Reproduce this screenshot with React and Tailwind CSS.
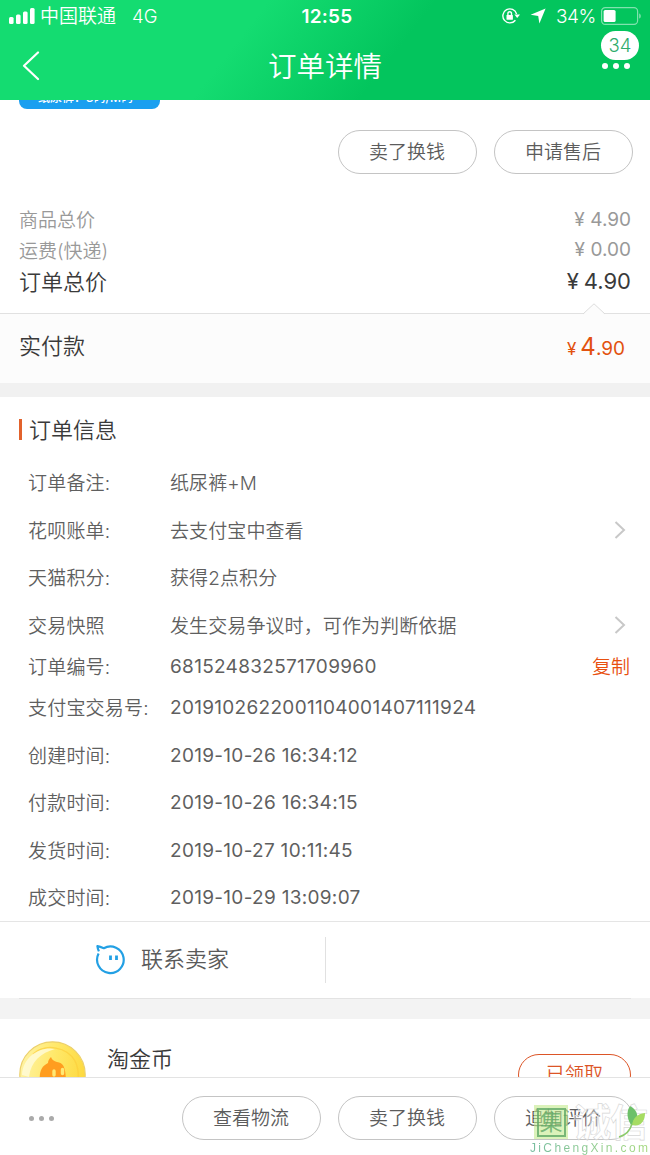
import clsx from 'clsx';

const SUMMARY = [
  { label: '商品总价', value: '4.90' },
  { label: '运费(快递)', value: '0.00' },
];

const DETAILS = [
  { label: '订单备注:', value: '纸尿裤+M', height: 'h-[48px]' },
  { label: '花呗账单:', value: '去支付宝中查看', height: 'h-[48px]', arrow: true },
  { label: '天猫积分:', value: '获得2点积分', height: 'h-[47px]' },
  { label: '交易快照', value: '发生交易争议时，可作为判断依据', height: 'h-[48px]', arrow: true },
  { label: '订单编号:', value: '681524832571709960', height: 'h-[34px]', numeric: true, copy: true },
  { label: '支付宝交易号:', value: '2019102622001104001407111924', height: 'h-[48px]', numeric: true },
  { label: '创建时间:', value: '2019-10-26 16:34:12', height: 'h-[48px]', numeric: true },
  { label: '付款时间:', value: '2019-10-26 16:34:15', height: 'h-[47px]', numeric: true },
  { label: '发货时间:', value: '2019-10-27 10:11:45', height: 'h-[48px]', numeric: true },
  { label: '成交时间:', value: '2019-10-29 13:09:07', height: 'h-[47px]', numeric: true },
];

function StatusBar() {
  return (
    <div className="flex h-8 items-center">
      <div className="flex flex-1 items-center pl-[9px]">
        <svg width="26" height="16" viewBox="0 0 26 16" fill="currentColor">
          <rect x="0" y="9" width="4.6" height="7" rx="1.5" />
          <rect x="7" y="6.5" width="4.6" height="9.5" rx="1.5" />
          <rect x="14" y="3.5" width="4.6" height="12.5" rx="1.5" />
          <rect x="21" y="0" width="4.6" height="16" rx="1.5" />
        </svg>
        <span className="ml-[5px] pt-[3px] text-[19px]">中国联通</span>
        <span className="ml-4 pt-[2px] text-[18.5px]">4G</span>
      </div>
      <span className="pl-[3px] pt-[2px] text-[19px] font-semibold tracking-[0.2px]">12:55</span>
      <div className="flex flex-1 items-center justify-end pr-[8px]">
        <svg width="19" height="16" viewBox="0 0 19 16" fill="none" stroke="currentColor" strokeWidth="1.4">
          <path d="M13.4 12.2A7 7 0 1 1 14.6 6" />
          <path d="M12.4 6.5h5.6l-2.8 3.6z" fill="currentColor" stroke="none" />
          <rect x="4.5" y="7" width="6.4" height="4.8" rx="0.6" fill="currentColor" stroke="none" />
          <path d="M5.9 7.2V5.6a1.8 1.8 0 0 1 3.6 0v1.6" />
        </svg>
        <svg className="ml-[9px]" width="16" height="16" viewBox="0 0 16 16" fill="currentColor">
          <path d="M15.6.4 9.4 15.4 8.2 8 .6 6.8z" />
        </svg>
        <span className="ml-[10px] pt-[2px] text-[19px] tracking-[-0.4px]">34%</span>
        <svg className="ml-[5px]" width="41" height="18" viewBox="0 0 41 18" fill="none">
          <rect x="0.6" y="0.6" width="36" height="16.8" rx="3.6" stroke="currentColor" strokeOpacity="0.5" strokeWidth="1.2" />
          <rect x="2.6" y="3" width="12" height="12" rx="1.6" fill="currentColor" />
          <path d="M38.3 6.4c1.8.6 1.8 4.6 0 5.2z" fill="currentColor" fillOpacity="0.6" />
        </svg>
      </div>
    </div>
  );
}

function Header() {
  return (
    <header className="h-[100px] bg-[linear-gradient(128deg,#14dc71_37%,#03c55d_60%)] text-white">
      <StatusBar />
      <div className="relative flex h-[68px] items-center justify-center">
        <svg className="absolute left-[22px] top-[19px]" width="18" height="30" viewBox="0 0 18 30" fill="none" stroke="currentColor" strokeWidth="2.2" strokeLinecap="round" strokeLinejoin="round">
          <path d="M16 1.5 2 14.8 16 28" />
        </svg>
        <h1 className="pt-[2px] text-[28.5px]">订单详情</h1>
        <div className="absolute left-[602px] top-[31px] flex gap-[5px]">
          <i className="size-[6px] rounded-full bg-white" />
          <i className="size-[6px] rounded-full bg-white" />
          <i className="size-[6px] rounded-full bg-white" />
        </div>
        <span className="absolute -top-px left-[601px] flex h-[29px] w-[38px] items-center justify-center rounded-full bg-white pt-px text-[18.5px] text-[#2eac6b]">
          34
        </span>
      </div>
    </header>
  );
}

function PillButton({ children }) {
  return (
    <button className="h-[44px] w-[139px] rounded-full border border-[#c4c4c4] pr-px pt-[3px] text-[19px] text-[#5c5c5c]">{children}</button>
  );
}

function Arrow() {
  return (
    <svg width="12" height="20" viewBox="0 0 12 20" fill="none" stroke="#c8c8c8" strokeWidth="2">
      <path d="m1.5 2 8.5 8-8.5 8" />
    </svg>
  );
}

function Summary() {
  return (
    <section className="h-[139px] px-[19px] pt-[30px] text-[19px] text-[#999]">
      {SUMMARY.map((s) => (
        <div key={s.label} className="flex h-[30.5px] items-center justify-between">
          <span className="pt-[4px]">{s.label}</span>
          <span className="flex gap-[5px] pt-px font-normal">
            <span className="w-[11px]">¥</span>
            {s.value}
          </span>
        </div>
      ))}
      <div className="flex h-[34px] items-center justify-between text-[22px] text-[#3a3a3a]">
        <span className="pt-px">订单总价</span>
        <span className="flex gap-[5px] pb-[2px] font-normal">
          <span>¥</span>
          <span>4.90</span>
        </span>
      </div>
    </section>
  );
}

function Payment() {
  return (
    <section className="relative flex h-[70px] items-center justify-between border-t border-[#e1e1e1] bg-[#fcfcfc] pb-[5px] pl-[19px] pr-[25px]">
      <svg className="absolute left-[583px] top-[-11px]" width="22" height="12" viewBox="0 0 22 12">
        <path d="M0.5 11 11 1l10.5 10v1H.5z" fill="#fcfcfc" />
        <path d="M0 11 11 .8 22 11" fill="none" stroke="#dcdcdc" />
      </svg>
      <span className="text-[22px] text-[#3a3a3a]">实付款</span>
      <span className="flex items-baseline pt-px text-[19px] font-normal text-[#e2520f]">
        <span className="mr-[4px] text-[17px]">¥</span>
        <span className="text-[24px]">4</span>.90
      </span>
    </section>
  );
}

function Details() {
  return (
    <section className="h-[524px]">
      <div className="flex h-[61px] items-center pl-[19px] pt-[4px]">
        <i className="h-[21px] w-[3px] bg-[#e2622c]" />
        <h2 className="ml-[7px] pt-px text-[22px] text-[#3a3a3a]">订单信息</h2>
      </div>
      {DETAILS.map((d) => (
        <div key={d.label} className={clsx('flex items-center pl-[28px] text-[19px] text-[#5f5f5f]', d.height)}>
          <span className="w-[142px] pt-[4px] tracking-[0.2px]">{d.label}</span>
          <span className={clsx('flex-1', d.numeric ? 'pt-[2px] font-normal tracking-[0.3px]' : 'pt-[4px] tracking-[0.1px]')}>{d.value}</span>
          {d.arrow && <span className="pr-[24px]"><Arrow /></span>}
          {d.copy && <button className="pr-[20px] pt-[4px] text-[#e8500f]">复制</button>}
        </div>
      ))}
    </section>
  );
}

function Contact() {
  return (
    <section className="flex h-[77px] items-center border-t border-[#e5e5e5]">
      <div className="flex h-[46px] w-[326px] items-center border-r border-[#e1e1e1] pb-[2px] pl-[95px]">
        <svg width="31" height="31" viewBox="0 0 31 31" fill="none" stroke="#23a0e4" strokeWidth="2.2" strokeLinejoin="round">
          <path d="M3.6 9.6A13.3 13.3 0 1 0 8.8 4.2C6.8 3.4 4.6 2.600 2.400 2.200c.2 1.900.7 3.500 1.500 5.200" />
          <path d="M15.5 11.5v4.5M21.500 11.500v4.500" strokeWidth="2.8" />
        </svg>
        <button className="ml-[15px] text-[22px] text-[#5a5a5a]">联系卖家</button>
      </div>
    </section>
  );
}

function Coin() {
  return (
    <svg width="67" height="67" viewBox="0 0 67 67">
      <defs>
        <linearGradient id="coin" x1="0" y1="0.3" x2="1" y2="0.5">
          <stop offset="0" stopColor="#fff3a4" />
          <stop offset="0.5" stopColor="#ffe869" />
          <stop offset="1" stopColor="#fdd93f" />
        </linearGradient>
      </defs>
      <circle cx="33.5" cy="33.5" r="32.7" fill="url(#coin)" stroke="#ecd06c" strokeWidth="1.2" />
      <path d="M14 13C27 2 48 6 56 20c3 6 4 12 3 20" fill="none" stroke="#fccf3c" strokeWidth="1.5" opacity="0.7" />
      <path d="M3 34C4 15 22 5 36 8 22 12 12 20 10 36z" fill="#fffce0" opacity="0.75" />
      <path d="M21 46c-1-14 0-20 8-24 0-2 1-4 3-6 1 3 3 4 6 5 8 1 9 8 9 25z" fill="#ff9d1f" />
      <path d="M35 30v4M43.500 28.500v4" stroke="#ffe974" strokeWidth="3.4" strokeLinecap="round" />
    </svg>
  );
}

function Coins() {
  return (
    <section className="flex h-[58px] items-start overflow-hidden pl-[19px] pr-[19px]">
      <div className="mt-[22px]"><Coin /></div>
      <span className="ml-[21px] mt-[24px] text-[22px] text-[#3a3a3a]">淘金币</span>
      <button className="ml-auto mt-[35px] h-[42px] w-[113px] shrink-0 rounded-full border border-[#dc5527] pt-px text-[19px] text-[#dc5527]">
        已领取
      </button>
    </section>
  );
}

function Watermark() {
  return (
    <div className="absolute left-[530px] top-[27px] h-[51px] w-[120px]">
      <span className="absolute left-[4px] top-0 flex size-[34px] items-center justify-center bg-[#c3ea8c]/60">
        <span className="flex size-[29px] items-center justify-center border-2 border-[#5fa866]/80 text-[23px] font-normal text-[#5fa866]/80">集</span>
      </span>
      <span className="absolute left-[43px] top-0 whitespace-nowrap text-[38px] font-bold leading-[34px] tracking-[-1px] text-white/40 [-webkit-text-stroke:0.6px_#d6d6d6]">
        诚信
      </span>
      <svg className="absolute left-[88px] top-[1px]" width="30" height="32" viewBox="0 0 30 32">
        <path d="M13 19C8 11 9 4 12 0c8 4 10 12 3 19z" fill="#6dc069" />
        <path d="M14 19c1-7 5-11 13-12 0 8-4 14-13 12z" fill="#a6dc62" />
        <path d="M14 18C12 25 8 29 1 31" fill="none" stroke="#8bcb6a" strokeWidth="1.5" />
      </svg>
      <span className="absolute left-0 top-[36px] bg-gradient-to-r from-[#78bda0] to-[#a5d97d] bg-clip-text font-['Liberation_Sans'] text-[12px] font-normal leading-[14px] tracking-[2.35px] text-transparent">
        JiChengXin.com
      </span>
    </div>
  );
}

function BottomBar() {
  return (
    <footer className="relative flex h-[78px] items-center gap-[17px] border-t border-[#e3e3e3] bg-white pl-[29px] pr-[17px] pt-[3px]">
      <div className="mr-auto flex gap-[5px]">
        <i className="size-[5px] rounded-full bg-[#aaa]" />
        <i className="size-[5px] rounded-full bg-[#aaa]" />
        <i className="size-[5px] rounded-full bg-[#aaa]" />
      </div>
      <PillButton>查看物流</PillButton>
      <PillButton>卖了换钱</PillButton>
      <PillButton>追加评价</PillButton>
      <Watermark />
    </footer>
  );
}

export default function App() {
  return (
    <main className="flex h-[1155px] w-[650px] flex-col overflow-hidden bg-white font-['Inter','Noto_Sans_CJK_SC',sans-serif] font-[350] *:shrink-0">
      <Header />
      <div className="flex h-[9px] items-end overflow-hidden pl-[19px]">
        <span className="flex h-[24px] w-[141px] shrink-0 items-center justify-center rounded-[8px] bg-[#1a9ff0] pr-[8px] pt-px text-[12px] font-medium text-white">
          纸尿裤：3码/M码
        </span>
      </div>
      <div className="flex h-[65px] items-end justify-end gap-[17px] pr-[17px]">
        <PillButton>卖了换钱</PillButton>
        <PillButton>申请售后</PillButton>
      </div>
      <Summary />
      <Payment />
      <div className="h-[14px] bg-[#f1f1f1]" />
      <Details />
      <Contact />
      <div className="h-[21px] bg-[#f3f3f3] px-[19px]">
        <div className="h-px bg-[#e3e3e3]" />
      </div>
      <Coins />
      <BottomBar />
    </main>
  );
}
